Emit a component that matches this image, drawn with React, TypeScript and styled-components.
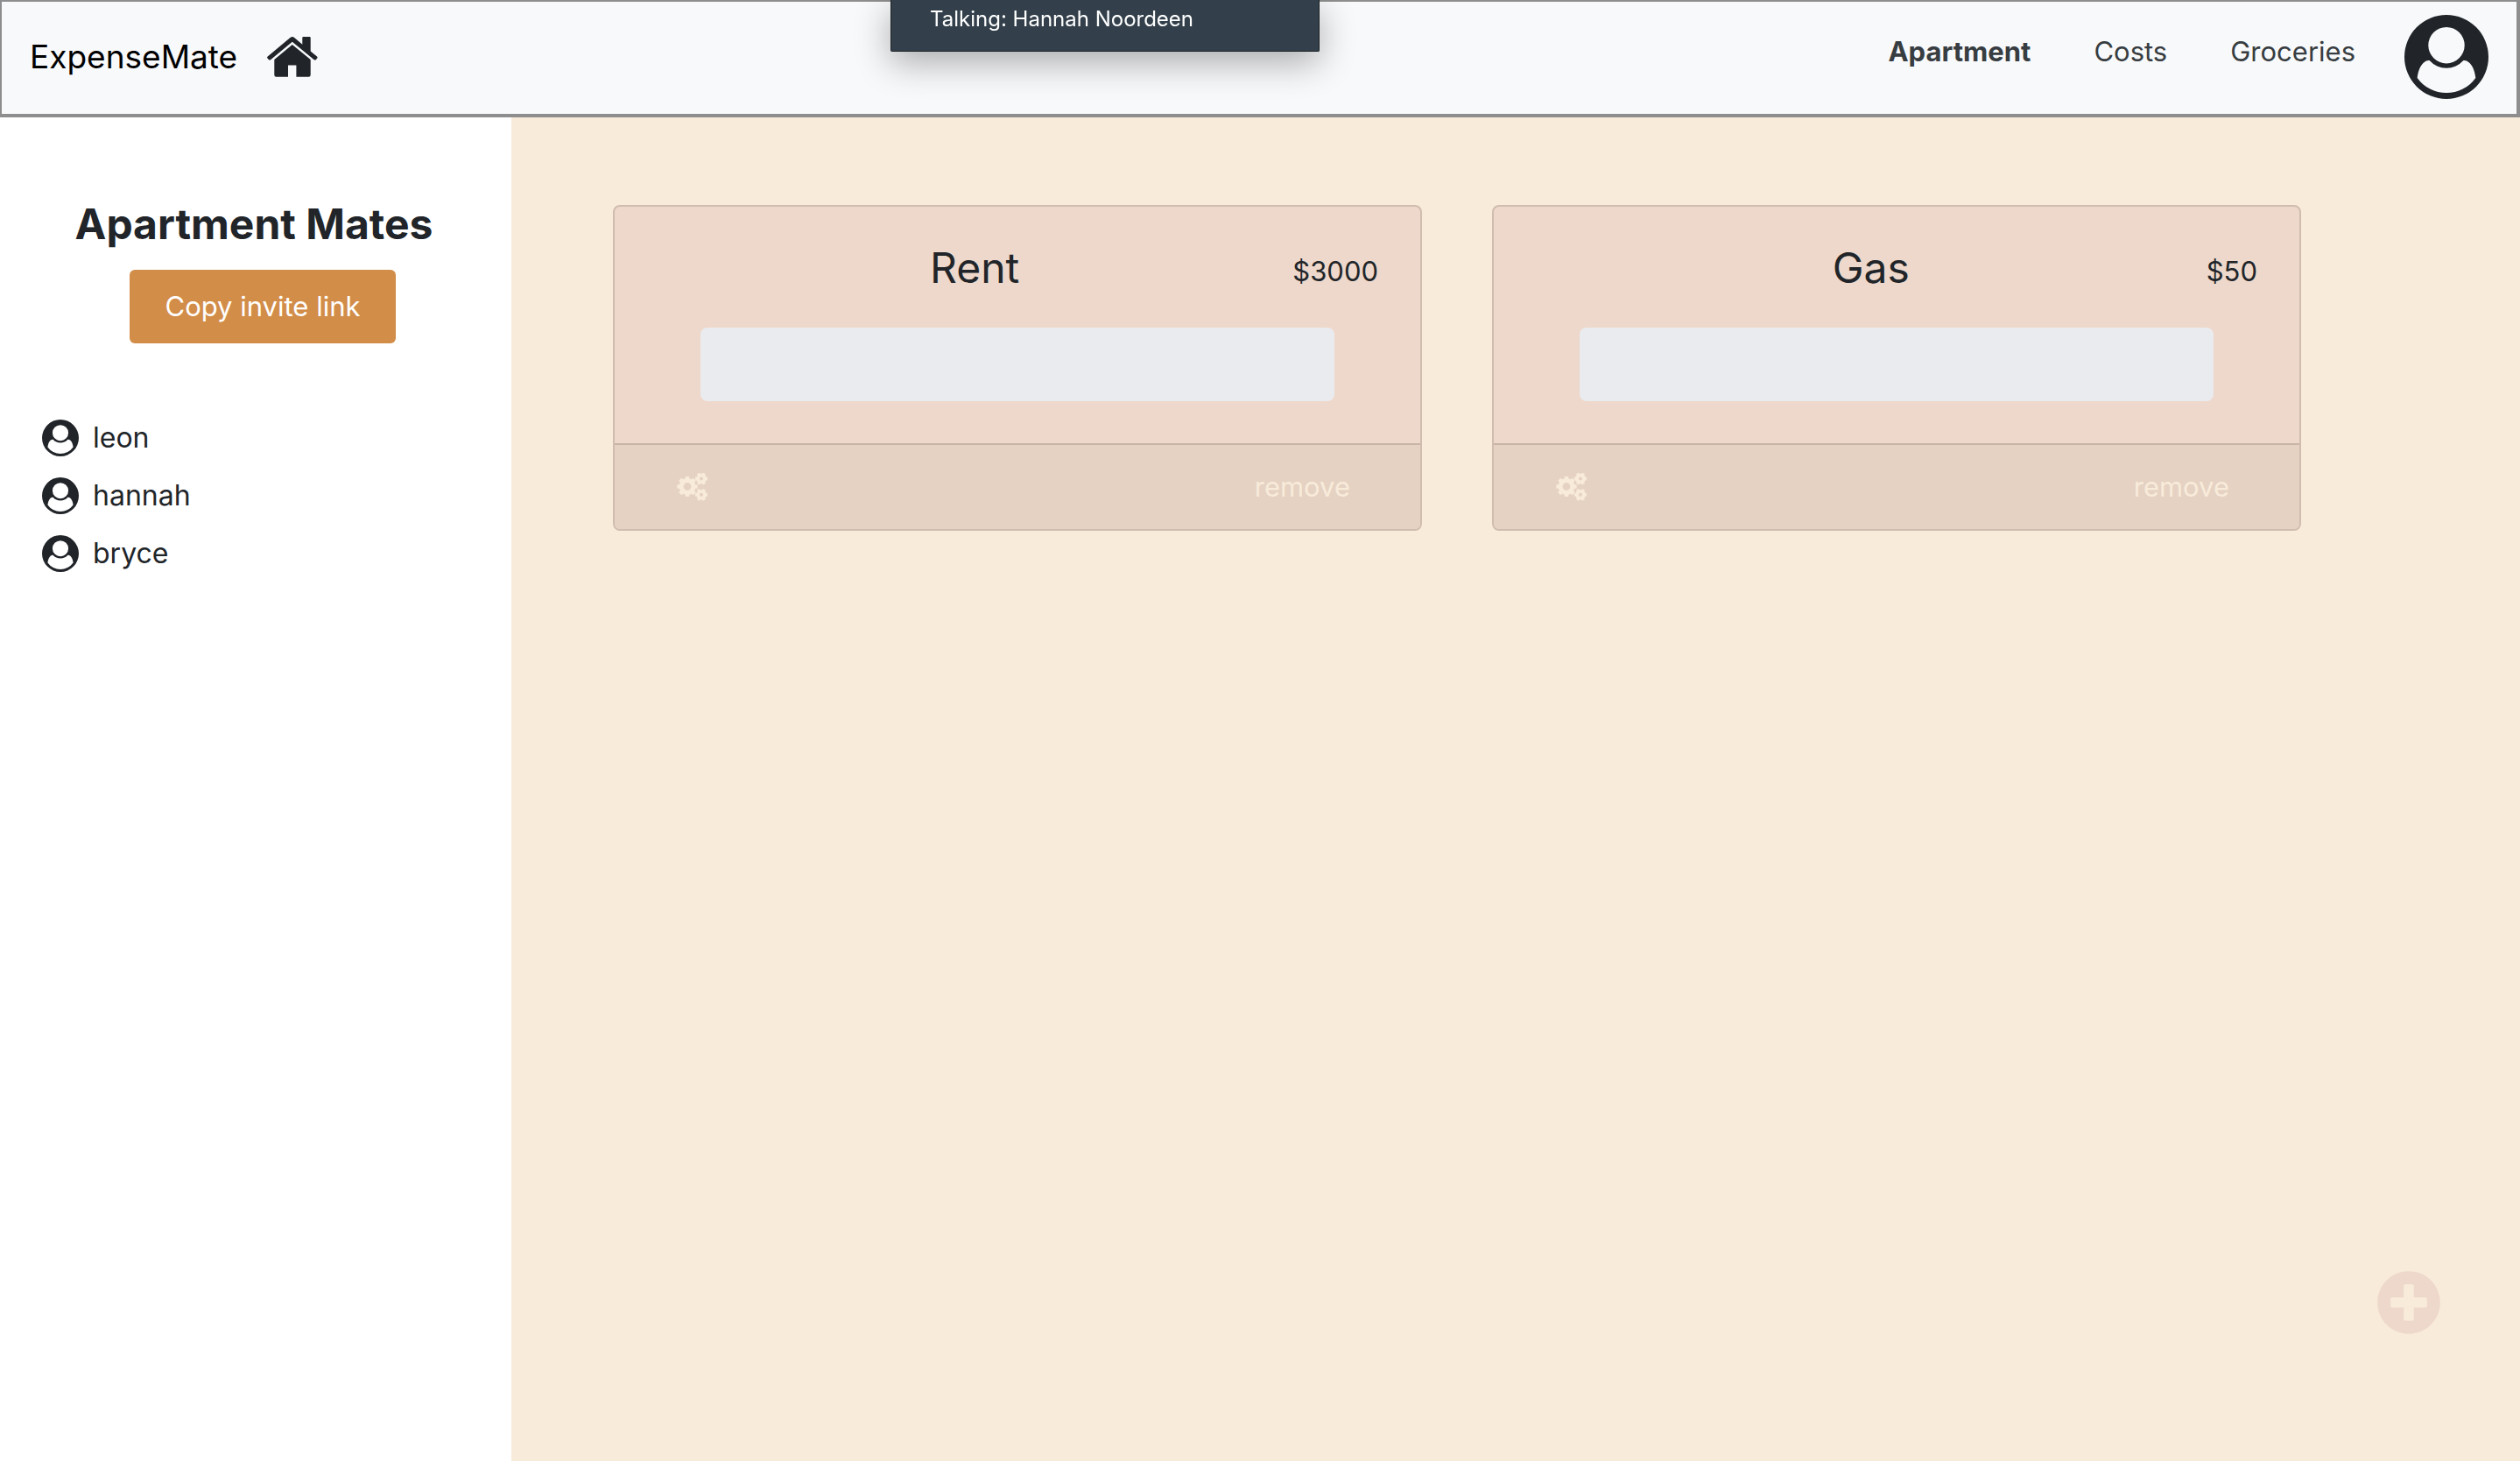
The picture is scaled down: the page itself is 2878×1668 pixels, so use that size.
import React from "react";
import styled, { createGlobalStyle } from "styled-components";
import { FaPlusCircle } from "react-icons/fa";

const GlobalStyle = createGlobalStyle`
  * {
    box-sizing: border-box;
  }
  body {
    margin: 0;
    background: #ffffff;
    color: #212529;
    font-family: Inter, "Liberation Sans", sans-serif;
    font-size: 31px;
    line-height: 48px;
  }
`;

const Page = styled.div`
  display: flex;
  flex-direction: column;
  min-height: 100vh;
`;

const Header = styled.header`
  display: flex;
  align-items: center;
  justify-content: space-between;
  padding: 15px 32px 17px;
  border: solid #8e8e8e;
  border-width: 2px 4px 4px 2px;
  background: #f8f9fb;
`;

const Brand = styled.a`
  display: flex;
  align-items: center;
  gap: 34px;
  color: #000000;
  font-size: 37px;
  text-decoration: none;
`;

const HomeGlyph = styled.svg`
  width: 58px;
  height: 46px;
  fill: #212529;
`;

const Account = styled.div`
  display: flex;
  align-items: center;
  gap: 56px;
`;

const Nav = styled.nav`
  display: flex;
  gap: 72px;
  padding-bottom: 12px;
`;

const NavLink = styled.a<{ $active?: boolean }>`
  color: #373d41;
  font-weight: ${(p) => (p.$active ? 700 : 400)};
  text-decoration: none;
`;

const PlainButton = styled.button`
  display: flex;
  align-items: center;
  padding: 0;
  border: 0;
  background: none;
  color: inherit;
  font: inherit;
  cursor: pointer;
`;

const Avatar = styled.svg<{ $size: number }>`
  flex: none;
  width: ${(p) => p.$size}px;
  height: ${(p) => p.$size}px;
  fill: #212529;
`;

const TalkingBanner = styled.div`
  position: fixed;
  top: 0;
  left: 1017px;
  width: 490px;
  height: 59px;
  padding: 6px 44px;
  border: solid #1c2024;
  border-width: 0 1px 1px;
  border-radius: 0 0 2px 2px;
  background: #33404b;
  box-shadow: 0 12px 40px rgba(0, 0, 0, 0.32);
  color: #ffffff;
  font-size: 24px;
  line-height: 32px;
`;

const Body = styled.div`
  display: flex;
  flex: 1;
`;

const Sidebar = styled.aside`
  flex: none;
  width: 584px;
  padding: 90px 52px 90px 48px;
`;

const SidebarTitle = styled.h1`
  margin: 0;
  font-size: 48px;
  font-weight: 700;
  line-height: 64px;
  text-align: center;
  white-space: nowrap;
`;

const InviteRow = styled.div`
  display: flex;
  justify-content: center;
  padding: 20px 0 84px 20px;
`;

const InviteButton = styled.button`
  padding: 18px 40px;
  border: 0;
  border-radius: 6px;
  background: #d28d49;
  color: #ffffff;
  font: inherit;
  cursor: pointer;
`;

const MateList = styled.ul`
  display: grid;
  gap: 18px;
  margin: 0;
  padding: 0;
  font-size: 32px;
  list-style: none;
`;

const Mate = styled.li`
  display: flex;
  align-items: center;
  gap: 16px;
`;

const Main = styled.main`
  flex: 1;
  padding: 100px 250px 100px 116px;
  background: #f8ebda;
`;

const CardGrid = styled.div`
  display: grid;
  grid-template-columns: 1fr 1fr;
  gap: 80px;
`;

const Card = styled.article`
  border: 2px solid #d0bdb0;
  border-radius: 8px;
  background: #eed8cb;
  overflow: hidden;
`;

const CardBody = styled.div`
  display: grid;
  gap: 40px;
  padding: 42px 48px 48px;
`;

const CardHead = styled.div`
  display: flex;
  align-items: flex-end;
`;

const CardTitle = styled.h2`
  flex: 1;
  margin: 0;
  font-size: 48px;
  font-weight: 400;
  line-height: 56px;
  text-align: center;
`;

const Progress = styled.div`
  height: 84px;
  margin: 0 50px;
  border-radius: 8px;
  background: #eaebef;
`;

const CardFooter = styled.footer`
  display: flex;
  align-items: center;
  justify-content: space-between;
  padding: 24px 80px 24px 71px;
  border-top: 2px solid #c9b5a8;
  background: #e5d2c3;
  color: #f8ebda;
`;

const CogGlyph = styled.svg`
  width: 36px;
  height: 32px;
  fill: currentColor;
`;

const AddButton = styled(PlainButton)`
  position: fixed;
  right: 90px;
  bottom: 144px;
  color: #eed8cb;
  font-size: 74px;
`;

function HomeIcon() {
  return (
    <HomeGlyph viewBox="0 0 58 46" aria-hidden="true">
      <path d="M26.4 1 Q28.8 -1 31.2 1 L40.3 8.8 V1.2 Q40.3 0 41.5 0 H48.5 Q49.7 0 49.7 1.2 V16.6 L57 22.6 Q58 23.6 57.2 24.6 L55.8 26.2 Q54.8 27 53.7 26.2 L28.8 5.8 L4 26.2 Q3 27 2 26.2 L.5 24.6 Q-.4 23.6 .7 22.6 Z" />
      <path d="M28.8 9 L49.7 26 V43.6 Q49.7 45.8 47.5 45.8 H33.4 V32.4 H24 V45.8 H10.5 Q8.3 45.8 8.3 43.6 V26 Z" />
    </HomeGlyph>
  );
}

function UserIcon({ size }: { size: number }) {
  return (
    <Avatar $size={size} viewBox="0 0 96 96" aria-hidden="true">
      <path
        fillRule="evenodd"
        d="M48 0a48 48 0 1 0 0 96a48 48 0 1 0 0-96Z M48 14a20.7 20.7 0 1 1 0 41.4a20.7 20.7 0 1 1 0-41.4Z M14.7 72C15.6 64 18 58 22 54.4C24.4 52.4 26.4 51.6 28.6 52A26 26 0 0 0 67.4 52C69.6 51.6 71.6 52.4 74 54.4C78 58 80.4 64 81.3 72A41 41 0 0 1 14.7 72Z"
      />
    </Avatar>
  );
}

function gearPath(cx: number, cy: number, r: number, hole: number, teeth: number) {
  const inner = r * 0.8;
  const step = (Math.PI * 2) / teeth;
  const points: string[] = [];
  for (let i = 0; i < teeth; i++) {
    const a = i * step;
    [
      [inner, -0.32],
      [r, -0.22],
      [r, 0.22],
      [inner, 0.32],
    ].forEach(([radius, t]) => {
      const angle = a + t * step;
      points.push(
        `${(cx + radius * Math.cos(angle)).toFixed(2)} ${(cy + radius * Math.sin(angle)).toFixed(2)}`
      );
    });
  }
  return `M${points.join("L")}Z M${cx - hole} ${cy}a${hole} ${hole} 0 1 0 ${hole * 2} 0a${hole} ${hole} 0 1 0 ${-hole * 2} 0Z`;
}

function CogsIcon() {
  return (
    <CogGlyph viewBox="0 0 36 32" aria-hidden="true">
      <path fillRule="evenodd" d={gearPath(12, 15.5, 11.8, 4.4, 8)} />
      <path fillRule="evenodd" d={gearPath(28, 6.5, 7.2, 2.1, 6)} />
      <path fillRule="evenodd" d={gearPath(28, 24.8, 7.2, 2.1, 6)} />
    </CogGlyph>
  );
}

function ExpenseCard({ name, amount }: { name: string; amount: number }) {
  return (
    <Card>
      <CardBody>
        <CardHead>
          <CardTitle>{name}</CardTitle>
          <span>${amount}</span>
        </CardHead>
        <Progress role="progressbar" aria-label={`${name} paid`} aria-valuenow={0} />
      </CardBody>
      <CardFooter>
        <PlainButton type="button" aria-label={`${name} settings`}>
          <CogsIcon />
        </PlainButton>
        <PlainButton type="button">remove</PlainButton>
      </CardFooter>
    </Card>
  );
}

const mates = ["leon", "hannah", "bryce"];
const expenses = [
  { name: "Rent", amount: 3000 },
  { name: "Gas", amount: 50 },
];

export default function App() {
  return (
    <Page>
      <GlobalStyle />
      <Header>
        <Brand href="#home">
          ExpenseMate
          <HomeIcon />
        </Brand>
        <Account>
          <Nav>
            <NavLink href="#apartment" $active>
              Apartment
            </NavLink>
            <NavLink href="#costs">Costs</NavLink>
            <NavLink href="#groceries">Groceries</NavLink>
          </Nav>
          <PlainButton type="button" aria-label="Account">
            <UserIcon size={96} />
          </PlainButton>
        </Account>
      </Header>
      <Body>
        <Sidebar>
          <SidebarTitle>Apartment Mates</SidebarTitle>
          <InviteRow>
            <InviteButton type="button">Copy invite link</InviteButton>
          </InviteRow>
          <MateList>
            {mates.map((mate) => (
              <Mate key={mate}>
                <UserIcon size={42} />
                {mate}
              </Mate>
            ))}
          </MateList>
        </Sidebar>
        <Main>
          <CardGrid>
            {expenses.map((expense) => (
              <ExpenseCard key={expense.name} {...expense} />
            ))}
          </CardGrid>
        </Main>
      </Body>
      <AddButton type="button" aria-label="Add expense">
        <FaPlusCircle />
      </AddButton>
      <TalkingBanner>Talking: Hannah Noordeen</TalkingBanner>
    </Page>
  );
}
